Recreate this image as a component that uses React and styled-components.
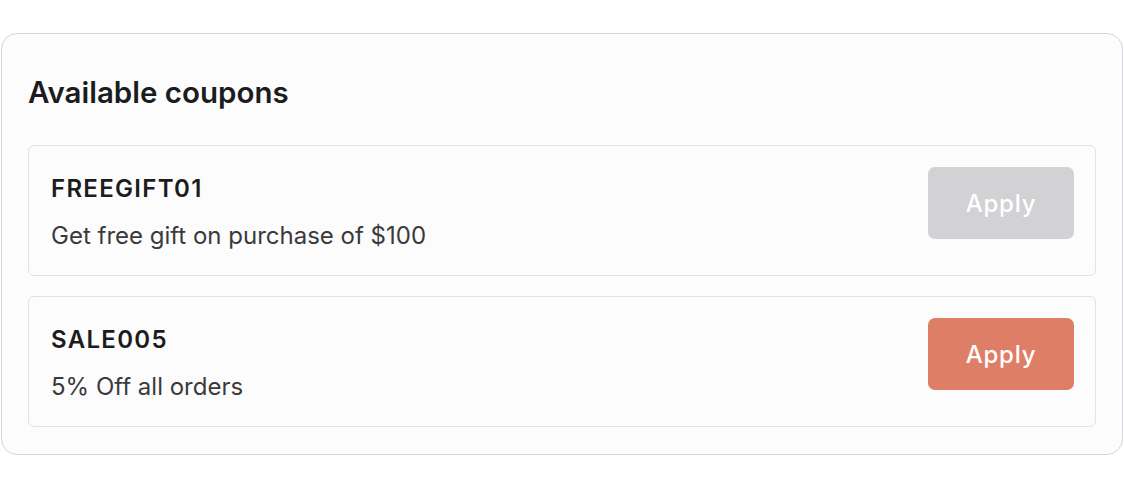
import styled, { createGlobalStyle } from "styled-components";

const coupons = [
  { code: "FREEGIFT01", text: "Get free gift on purchase of $100", active: false },
  { code: "SALE005", text: "5% Off all orders", active: true },
];

export default function App() {
  return (
    <>
      <GlobalStyle />
      <Page>
        <Panel>
          <Heading>Available coupons</Heading>
          <CouponList>
            {coupons.map((c) => (
              <CouponCard key={c.code}>
                <CouponInfo>
                  <CouponCode>{c.code}</CouponCode>
                  <CouponText>{c.text}</CouponText>
                </CouponInfo>
                <ApplyButton $active={c.active}>Apply</ApplyButton>
              </CouponCard>
            ))}
          </CouponList>
        </Panel>
      </Page>
    </>
  );
}

const GlobalStyle = createGlobalStyle`
  body {
    margin: 0;
    background: #ffffff;
    font-family: Inter, "Noto Sans", sans-serif;
    color: #1c1c1e;
  }
`;

const Page = styled.div`
  padding: 33px 1px 0 1px;
`;

const Panel = styled.section`
  width: 1122px;
  box-sizing: border-box;
  background: #fcfcfd;
  border: 1px solid #d6d6d8;
  border-radius: 16px;
  padding: 41px 26px 27px 26px;
`;

const Heading = styled.h2`
  margin: 0 0 36px;
  font-size: 29.5px;
  line-height: 34px;
  font-weight: 600;
  color: #1c1c1e;
`;

const CouponList = styled.div`
  display: flex;
  flex-direction: column;
  gap: 20px;
`;

const CouponCard = styled.div`
  display: flex;
  align-items: flex-start;
  justify-content: space-between;
  height: 131px;
  box-sizing: border-box;
  background: #fcfcfd;
  border: 1px solid #e3e3e6;
  border-radius: 6px;
  padding: 21px 21px 0 22px;
`;

const CouponInfo = styled.div`
  display: flex;
  flex-direction: column;
  gap: 19px;
  padding-top: 8px;
`;

const CouponCode = styled.div`
  font-size: 24px;
  line-height: 28px;
  font-weight: 600;
  letter-spacing: 1.3px;
  color: #1c1c1e;
`;

const CouponText = styled.div`
  font-size: 24px;
  line-height: 28px;
  font-weight: 400;
  color: #3a3a3c;
`;

const ApplyButton = styled.button`
  width: 146px;
  height: 72px;
  border: none;
  border-radius: 7px;
  background: ${(p) => (p.$active ? "#df7e67" : "#d2d1d4")};
  color: #ffffff;
  font-family: Inter, "Noto Sans", sans-serif;
  font-size: 24px;
  font-weight: 500;
  letter-spacing: 0.8px;
  cursor: ${(p) => (p.$active ? "pointer" : "default")};
`;
